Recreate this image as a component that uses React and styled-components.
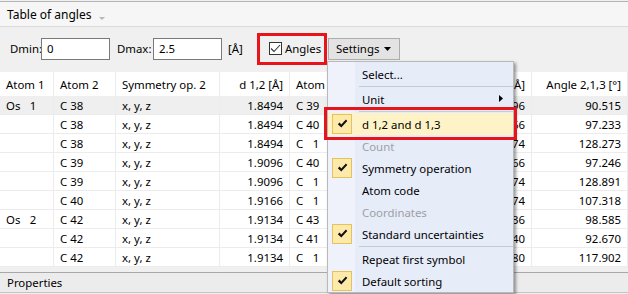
import React from 'react';
import styled, { createGlobalStyle } from 'styled-components';

const GlobalStyle = createGlobalStyle`
  html, body { margin: 0; padding: 0; background: #f0f0f0; }
  body { font-family: "Noto Sans", "Open Sans", sans-serif; font-size: 11.4px; color: #000; }
`;

const Page = styled.div`
  position: relative;
  width: 628px;
  height: 294px;
  overflow: hidden;
  background: #f0f0f0;
  display: flex;
  flex-direction: column;
`;

const TabHeader = styled.div`
  height: 24px;
  margin-top: 1px;
  border-top: 1px solid #b4b4b4;
  border-bottom: 1px solid #dadada;
  background: #f6f6f6;
  display: flex;
  align-items: center;
  gap: 8px;
  padding-left: 7px;
  font-size: 12px;
  svg { margin-top: 8px; }
`;

const Toolbar = styled.div`
  height: 38px;
  box-sizing: border-box;
  padding: 5px 0 0 10px;
  display: flex;
  align-items: center;
`;

const Label = styled.span`
  width: ${p => p.$w}px;
  flex: none;
`;

const Field = styled.div`
  width: 69px;
  height: 22px;
  flex: none;
  box-sizing: border-box;
  border: 1px solid #7a7a7a;
  background: #fff;
  padding-left: 5px;
  display: flex;
  align-items: center;
  margin-right: ${p => p.$gap}px;
`;

const Highlight = styled.div`
  width: 70px;
  height: 32px;
  flex: none;
  box-sizing: border-box;
  border: 3px solid #e8141c;
  display: flex;
  align-items: center;
  gap: 3px;
  padding-left: 9px;
  margin-right: 1px;
`;

const CheckBox = styled.div`
  width: 13px;
  height: 13px;
  box-sizing: border-box;
  border: 1px solid #333;
  background: #fff;
  display: flex;
  align-items: center;
  justify-content: center;
`;

const DropButton = styled.div`
  width: 72px;
  height: 22px;
  box-sizing: border-box;
  border: 1px solid #adadad;
  background: #e3e3e3;
  display: flex;
  align-items: center;
  justify-content: space-between;
  padding: 0 8px 0 7px;
`;

const Grid = styled.div`
  margin-top: 7px;
  display: grid;
  grid-template-columns: 54px 62px 104px 70px 62px 104px 76px 1fr;
  background: #fff;
`;

const Cell = styled.div`
  height: ${p => (p.$head ? 24 : 19)}px;
  box-sizing: border-box;
  padding: 0 6px;
  border-right: 1px solid #ececec;
  border-bottom: ${p => (p.$head ? 'none' : '1px solid #ececec')};
  background: ${p => (p.$sel ? '#efefef' : '#fff')};
  display: flex;
  align-items: center;
  justify-content: ${p => (p.$right ? 'flex-end' : 'flex-start')};
  white-space: pre;
  overflow: hidden;
`;

const Properties = styled.div`
  margin-top: 5px;
  height: 19px;
  border-top: 1px solid #a8a8a8;
  border-bottom: 1px solid #c4c4c4;
  background: #ececec;
  padding-left: 7px;
  display: flex;
  align-items: center;
`;

const Menu = styled.div`
  position: absolute;
  left: 327px;
  top: 61px;
  width: 187px;
  box-sizing: border-box;
  border: 1px solid #b9b9b9;
  background: linear-gradient(to right, #eff2fb 0 27px, #e7ecf9 27px);
  box-shadow: 2px 2px 3px rgba(0, 0, 0, 0.4);
  padding: 1px 0 0 0;
`;

const Item = styled.div`
  position: relative;
  height: 22px;
  display: flex;
  align-items: center;
  padding-left: 34px;
  color: ${p => (p.$disabled ? '#9da0a6' : '#000')};
  background: ${p => (p.$hot ? '#fdf3c6' : 'transparent')};
`;

const Mark = styled.div`
  position: absolute;
  left: 4px;
  top: 1px;
  width: 20px;
  height: 20px;
  box-sizing: border-box;
  border: 1px solid #e4c35c;
  background: #fde9a9;
  display: flex;
  align-items: center;
  justify-content: center;
`;

const Arrow = styled.svg`
  position: absolute;
  right: 10px;
  top: 7px;
`;

const Separator = styled.div`
  height: 3px;
  margin-left: 31px;
  display: flex;
  align-items: center;
  &::after {
    content: '';
    flex: 1;
    height: 1px;
    background: #c8cbd2;
  }
`;

const RedBox = styled.div`
  position: absolute;
  left: 324px;
  top: 107px;
  width: 193px;
  height: 33px;
  box-sizing: border-box;
  border: 3px solid #e8141c;
`;

const fs = '\u2007';
const atom = (el, n) => `${el} ${String(n).padStart(2, fs)}`;

const rows = [
  ['Os', 1, 38, '1.8494', 39, '1.9096', '90.515'],
  [null, 1, 38, '1.8494', 40, '1.9166', '97.233'],
  [null, 1, 38, '1.8494', 1, '2.1574', '128.273'],
  [null, 1, 39, '1.9096', 40, '1.9166', '97.246'],
  [null, 1, 39, '1.9096', 1, '2.1574', '128.891'],
  [null, 1, 40, '1.9166', 1, '2.1574', '107.318'],
  ['Os', 2, 42, '1.9134', 43, '1.9136', '98.585'],
  [null, 2, 42, '1.9134', 41, '1.9140', '92.670'],
  [null, 2, 42, '1.9134', 1, '2.1680', '117.902'],
];

const heads = [
  ['Atom 1'], ['Atom 2'], ['Symmetry op. 2'], ['d 1,2 [Å]', true],
  ['Atom 3'], ['Symmetry op. 3'], ['d 1,3 [Å]', true], ['Angle 2,1,3 [°]', true],
];

const Tick = () => (
  <svg width="11" height="10" viewBox="0 0 11 10">
    <path d="M0.8 5.2 L2.6 3.6 L4.3 5.6 L8.9 0.6 L10.3 1.9 L4.3 8.6 Z" fill="#111" />
  </svg>
);

const menuItems = [
  { t: 'Select...' },
  { sep: true },
  { t: 'Unit', sub: true },
  { sep: true },
  { t: 'd 1,2 and d 1,3', on: true, hot: true },
  { t: 'Count', off: true },
  { t: 'Symmetry operation', on: true },
  { t: 'Atom code' },
  { t: 'Coordinates', off: true },
  { t: 'Standard uncertainties', on: true },
  { sep: true },
  { t: 'Repeat first symbol' },
  { t: 'Default sorting', on: true },
];

export default function App() {
  return (
    <Page>
      <GlobalStyle />
      <TabHeader>
        <span>Table of angles</span>
        <svg width="6" height="3" viewBox="0 0 6 3"><path d="M0 0 H6 L3 3 Z" fill="#b8b8b8" /></svg>
      </TabHeader>

      <Toolbar>
        <Label $w={31}>Dmin:</Label>
        <Field $gap={7}>0</Field>
        <Label $w={36}>Dmax:</Label>
        <Field $gap={6}>2.5</Field>
        <Label $w={29}>[Å]</Label>
        <Highlight>
          <CheckBox>
            <svg width="11" height="9" viewBox="0 0 11 9">
              <path d="M1 4.5 L4 7.5 L10 1" stroke="#333" strokeWidth="1.1" fill="none" />
            </svg>
          </CheckBox>
          <span>Angles</span>
        </Highlight>
        <DropButton>
          <span>Settings</span>
          <svg width="7" height="4" viewBox="0 0 7 4"><path d="M0 0 H7 L3.5 4 Z" fill="#000" /></svg>
        </DropButton>
      </Toolbar>

      <Grid>
        {heads.map(([h, r]) => (
          <Cell key={h} $head $right={r}>{h}</Cell>
        ))}
        {rows.map(([os, osn, a2, d12, a3, d13, ang], i) => {
          const sel = i === 0;
          return (
            <React.Fragment key={i}>
              <Cell $sel={sel}>{os ? atom('Os', osn) : ''}</Cell>
              <Cell $sel={sel}>{atom('C', a2)}</Cell>
              <Cell $sel={sel}>x, y, z</Cell>
              <Cell $sel={sel} $right>{d12}</Cell>
              <Cell $sel={sel}>{atom('C', a3)}</Cell>
              <Cell $sel={sel}>x, y, z</Cell>
              <Cell $sel={sel} $right>{d13}</Cell>
              <Cell $sel={sel} $right>{ang}</Cell>
            </React.Fragment>
          );
        })}
      </Grid>

      <Properties>Properties</Properties>

      <Menu>
        {menuItems.map((m, i) =>
          m.sep ? (
            <Separator key={i} />
          ) : (
            <Item key={i} $disabled={m.off} $hot={m.hot}>
              {m.on && <Mark><Tick /></Mark>}
              {m.t}
              {m.sub && (
                <Arrow width="4" height="7" viewBox="0 0 4 7"><path d="M0 0 L4 3.5 L0 7 Z" fill="#000" /></Arrow>
              )}
            </Item>
          )
        )}
      </Menu>
      <RedBox />
    </Page>
  );
}
